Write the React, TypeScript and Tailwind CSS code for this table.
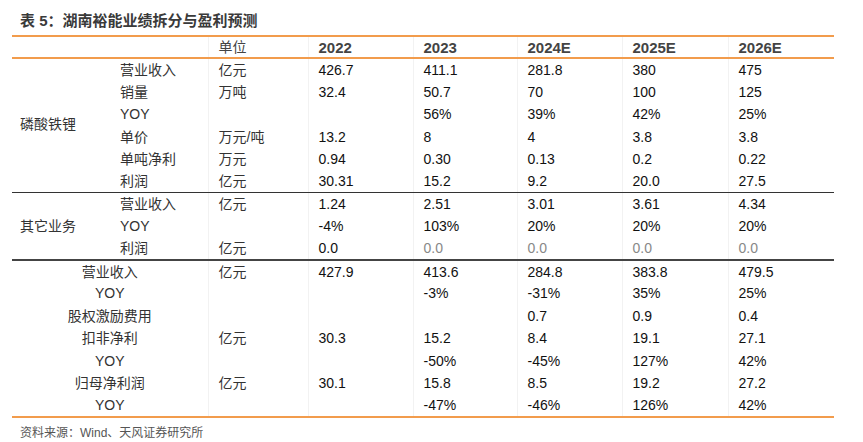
import React from "react";

type Row = { label: string; unit: string; vals: string[]; muted?: boolean };

const lfp: Row[] = [
  { label: "营业收入", unit: "亿元", vals: ["426.7", "411.1", "281.8", "380", "475"] },
  { label: "销量", unit: "万吨", vals: ["32.4", "50.7", "70", "100", "125"] },
  { label: "YOY", unit: "", vals: ["", "56%", "39%", "42%", "25%"] },
  { label: "单价", unit: "万元/吨", vals: ["13.2", "8", "4", "3.8", "3.8"] },
  { label: "单吨净利", unit: "万元", vals: ["0.94", "0.30", "0.13", "0.2", "0.22"] },
  { label: "利润", unit: "亿元", vals: ["30.31", "15.2", "9.2", "20.0", "27.5"] },
];

const other: Row[] = [
  { label: "营业收入", unit: "亿元", vals: ["1.24", "2.51", "3.01", "3.61", "4.34"] },
  { label: "YOY", unit: "", vals: ["-4%", "103%", "20%", "20%", "20%"] },
  { label: "利润", unit: "亿元", vals: ["0.0", "0.0", "0.0", "0.0", "0.0"], muted: true },
];

const total: Row[] = [
  { label: "营业收入", unit: "亿元", vals: ["427.9", "413.6", "284.8", "383.8", "479.5"] },
  { label: "YOY", unit: "", vals: ["", "-3%", "-31%", "35%", "25%"] },
  { label: "股权激励费用", unit: "", vals: ["", "", "0.7", "0.9", "0.4"] },
  { label: "扣非净利", unit: "亿元", vals: ["30.3", "15.2", "8.4", "19.1", "27.1"] },
  { label: "YOY", unit: "", vals: ["", "-50%", "-45%", "127%", "42%"] },
  { label: "归母净利润", unit: "亿元", vals: ["30.1", "15.8", "8.5", "19.2", "27.2"] },
  { label: "YOY", unit: "", vals: ["", "-47%", "-46%", "126%", "42%"] },
];

const years = ["2022", "2023", "2024E", "2025E", "2026E"];
const cell = "h-[22.4px] p-0 pl-[10px] text-left align-middle whitespace-nowrap border-l border-[#f2f2f2]";

function Values({ row, line }: { row: Row; line?: string }) {
  return (
    <>
      <td className={`${cell} text-[#333] ${line ?? ""}`}>{row.unit}</td>
      {row.vals.map((v, i) => (
        <td
          key={i}
          className={`${cell} ${line ?? ""} ${row.muted && i > 0 ? "text-[#888]" : "text-[#111]"}`}
        >
          {v}
        </td>
      ))}
    </>
  );
}

export default function App() {
  return (
    <div
      className="w-[863px] h-[442px] bg-white pt-[11px] px-[12px] text-[14px] leading-none"
      style={{ fontFamily: '"Liberation Sans", "Noto Sans CJK SC", sans-serif' }}
    >
      <div className="pl-[8px] h-[20px] text-[15px] font-semibold text-[#3a3a3a] leading-[20px]">
        表 5：湖南裕能业绩拆分与盈利预测
      </div>
      <table className="mt-[4px] w-[822px] table-fixed border-collapse">
        <colgroup>
          <col className="w-[98px]" />
          <col className="w-[98px]" />
          <col className="w-[100px]" />
          <col className="w-[105px]" />
          <col className="w-[104px]" />
          <col className="w-[105px]" />
          <col className="w-[106px]" />
          <col className="w-[106px]" />
        </colgroup>
        <thead>
          <tr className="border-y-2 border-[#f29c4c]">
            <th className="h-[22px] p-0" />
            <th className="h-[22px] p-0" />
            <th className={`${cell} font-normal text-[#444]`}>单位</th>
            {years.map((y) => (
              <th key={y} className={`${cell} font-bold text-[#444] text-[15px]`}>
                {y}
              </th>
            ))}
          </tr>
        </thead>
        <tbody>
          {lfp.map((r, i) => {
            const line = i === lfp.length - 1 ? "border-b border-b-[#333]" : "";
            return (
              <tr key={"a" + i}>
                {i === 0 && (
                  <td
                    rowSpan={lfp.length}
                    className="p-0 pl-[8px] text-left align-middle text-[#333] border-b border-b-[#333]"
                  >
                    <div className="-mt-[4px]">磷酸铁锂</div>
                  </td>
                )}
                <td className={`${cell} border-l-0 text-[#333] ${line}`}>{r.label}</td>
                <Values row={r} line={line} />
              </tr>
            );
          })}
          {other.map((r, i) => {
            const line = i === other.length - 1 ? "border-b-2 border-b-[#444]" : "";
            return (
              <tr key={"b" + i}>
                {i === 0 && (
                  <td
                    rowSpan={other.length}
                    className="p-0 pl-[8px] text-left align-middle text-[#333] border-b-2 border-b-[#444]"
                  >
                    其它业务
                  </td>
                )}
                <td className={`${cell} border-l-0 text-[#333] ${line}`}>{r.label}</td>
                <Values row={r} line={line} />
              </tr>
            );
          })}
          {total.map((r, i) => {
            const line = i === total.length - 1 ? "border-b-2 border-b-[#f29c4c]" : "";
            return (
              <tr key={"c" + i}>
                <td colSpan={2} className={`h-[22.4px] p-0 text-center align-middle text-[#333] ${line}`}>
                  {r.label}
                </td>
                <Values row={r} line={line} />
              </tr>
            );
          })}
        </tbody>
      </table>
      <div className="pl-[8px] mt-[9px] text-[12px] text-[#555]">资料来源：Wind、天风证券研究所</div>
    </div>
  );
}
